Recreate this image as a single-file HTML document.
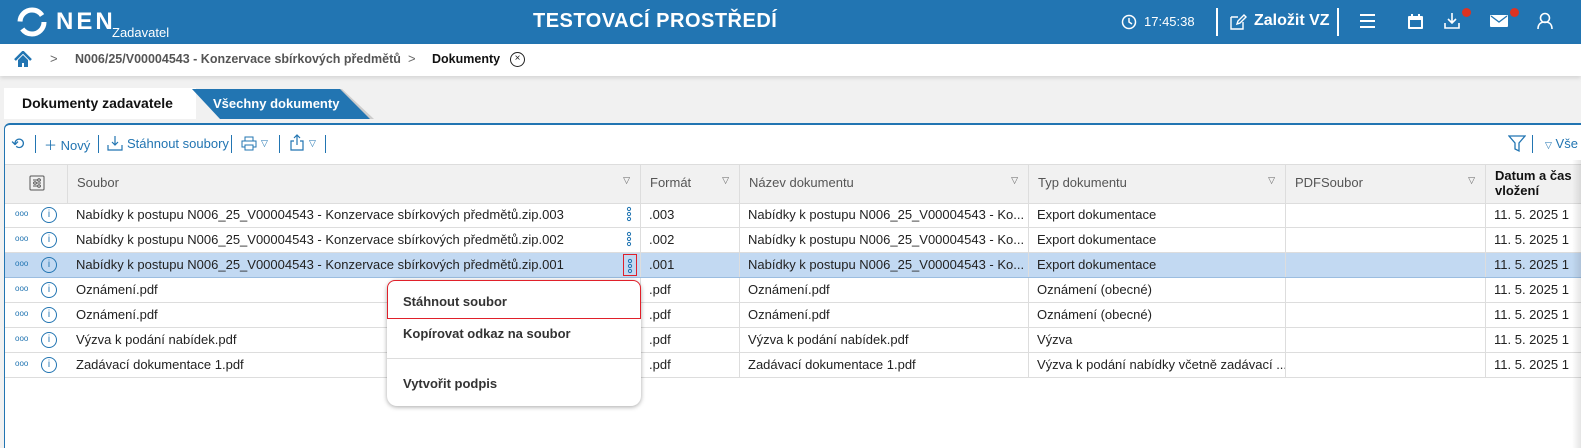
<!DOCTYPE html>
<html><head><meta charset="utf-8"><style>
*{box-sizing:border-box;margin:0;padding:0}
body{width:1581px;height:448px;overflow:hidden;background:#f1f1f1;font-family:"Liberation Sans",Arial,sans-serif;font-size:13px;color:#222;position:relative}
.top{position:absolute;left:0;top:0;width:1581px;height:44px;background:#2275b2;color:#fff}
.bc{position:absolute;left:0;top:44px;width:1581px;height:32px;background:#fff;box-shadow:0 2px 4px rgba(0,0,0,.12)}
.abs{position:absolute}
.panel{position:absolute;left:4px;top:123px;width:1577px;height:325px;background:#fff;border-top:2px solid #2275b2;border-left:1px solid #2275b2;border-top-left-radius:6px}
.hdr{position:absolute;top:164px;height:40px;background:#f1f1f1;border-right:1px solid #ddd;border-top:1px solid #ddd;border-bottom:1px solid #ddd;color:#555}
.row{position:absolute;left:5px;width:1576px;height:25px;border-bottom:1px solid #ddd}
.cell{position:absolute;top:0;height:24px;line-height:24px;border-right:1px solid #ddd;padding-left:8px;white-space:nowrap;overflow:hidden}
.tri{position:absolute;right:10px;top:10px;font-size:9px;color:#666}
.ico{color:#2275b2}
.menu{position:absolute;left:387px;top:280px;width:254px;height:126px;background:#fff;border-radius:10px;box-shadow:0 1px 5px rgba(0,0,0,.35)}
.menu div{position:absolute;left:16px;font-weight:bold;font-size:13px;color:#333}
</style></head><body>
<div class="top">
 <svg class="abs" style="left:16px;top:6px" width="32" height="32" viewBox="0 0 32 32"><circle cx="16" cy="16" r="12" fill="none" stroke="#fff" stroke-width="5" stroke-dasharray="30 8"/></svg>
 <div class="abs" style="left:56px;top:8px;font-size:24px;font-weight:bold;letter-spacing:3px">NEN</div>
 <div class="abs" style="left:112px;top:25px;font-size:13px">Zadavatel</div>
 <div class="abs" style="left:533px;top:10px;font-size:20px;font-weight:bold;letter-spacing:.5px">TESTOVACÍ PROSTŘEDÍ</div>
 <svg class="abs" style="left:1121px;top:14px" width="16" height="16"><circle cx="8" cy="8" r="6.5" fill="none" stroke="#fff" stroke-width="1.5"/><path d="M8 4v4l3 2" stroke="#fff" fill="none" stroke-width="1.5"/></svg>
 <div class="abs" style="left:1144px;top:14px;font-size:13px">17:45:38</div>
 <div class="abs" style="left:1216px;top:8px;width:2px;height:28px;background:#fff"></div>
 <svg class="abs" style="left:1229px;top:13px" width="18" height="18"><path d="M2 4h7M2 4v12h12v-7M8 11l1-3 6-6 2 2-6 6z" stroke="#fff" fill="none" stroke-width="1.4"/></svg>
 <div class="abs" style="left:1254px;top:12px;font-size:16px;font-weight:bold">Založit VZ</div>
 <div class="abs" style="left:1337px;top:8px;width:2px;height:28px;background:#fff"></div>
 <div class="abs" style="left:1360px;top:14px;width:15px;height:2px;background:#fff;box-shadow:0 6px 0 #fff,0 12px 0 #fff"></div>
 <svg class="abs" style="left:1407px;top:13px" width="17" height="17"><rect x="1" y="3" width="15" height="13" rx="1" fill="#fff"/><rect x="3" y="7" width="11" height="7" fill="#2275b2"/><path d="M5 1v4M12 1v4" stroke="#fff" stroke-width="2"/></svg>
 <svg class="abs" style="left:1443px;top:12px" width="18" height="18"><path d="M9 1v10M5 7l4 4 4-4M2 11v5h14v-5" stroke="#fff" fill="none" stroke-width="1.6"/></svg>
 <div class="abs" style="left:1462px;top:8px;width:9px;height:9px;border-radius:50%;background:#d32"></div>
 <svg class="abs" style="left:1490px;top:14px" width="18" height="14"><rect x="0" y="1" width="18" height="12" rx="1" fill="#fff"/><path d="M1 2l8 6 8-6" stroke="#2275b2" fill="none" stroke-width="1.3"/></svg>
 <div class="abs" style="left:1510px;top:8px;width:9px;height:9px;border-radius:50%;background:#d32"></div>
 <svg class="abs" style="left:1537px;top:12px" width="16" height="18"><circle cx="8" cy="6" r="4.5" fill="none" stroke="#fff" stroke-width="1.6"/><path d="M1 17c0-5 3-7 7-7s7 2 7 7" stroke="#fff" fill="none" stroke-width="1.6"/></svg>
</div>
<div class="bc">
 <svg class="abs" style="left:14px;top:7px" width="18" height="17"><path d="M1 9L9 1l8 8" stroke="#2275b2" fill="none" stroke-width="2.5"/><path d="M4 9v7h4v-4h2v4h4V9L9 4z" fill="#2275b2"/></svg>
 <div class="abs" style="left:50px;top:7px;color:#666">&gt;</div>
 <div class="abs" style="left:75px;top:8px;color:#555;font-weight:bold;font-size:12.5px">N006/25/V00004543 - Konzervace sbírkových předmětů</div>
 <div class="abs" style="left:408px;top:7px;color:#666">&gt;</div>
 <div class="abs" style="left:432px;top:8px;font-weight:bold;font-size:12.5px;color:#111">Dokumenty</div>
 <div class="abs" style="left:510px;top:8px;width:15px;height:15px;border:1.3px solid #222;border-radius:50%;font-size:10px;line-height:12px;text-align:center">×</div>
</div>
<div class="abs" style="left:4px;top:88px;width:192px;height:31px;background:#fff"></div>
<div class="abs" style="left:22px;top:95px;font-size:14px;font-weight:bold;color:#111">Dokumenty zadavatele</div>
<svg class="abs" style="left:192px;top:89px" width="185" height="30"><path d="M0 0H150L182 30H30Z" fill="#ccc"/><path d="M0 0H148L178 30H28Z" fill="#2275b2"/></svg>
<div class="abs" style="left:213px;top:96px;font-size:13px;font-weight:bold;color:#fff">Všechny dokumenty</div>
<div class="panel"></div>
<div class="abs ico" style="left:11px;top:134px;font-size:16px">⟲</div>
<div class="abs" style="left:35px;top:135px;width:1px;height:18px;background:#2275b2"></div>
<div class="abs ico" style="left:44px;top:135px;font-size:13px">＋ Nový</div>
<div class="abs" style="left:98px;top:135px;width:1px;height:18px;background:#2275b2"></div>
<svg class="abs" style="left:107px;top:135px" width="16" height="16"><path d="M8 1v9M5 7l3 3 3-3M1 10v5h14v-5" stroke="#2275b2" fill="none" stroke-width="1.2"/></svg>
<div class="abs ico" style="left:127px;top:136px">Stáhnout soubory</div>
<div class="abs" style="left:231px;top:135px;width:1px;height:18px;background:#2275b2"></div>
<svg class="abs" style="left:241px;top:136px" width="16" height="15"><rect x="4" y="1" width="8" height="4" fill="none" stroke="#2275b2"/><rect x="1" y="5" width="14" height="6" fill="none" stroke="#2275b2"/><rect x="4" y="9" width="8" height="5" fill="#fff" stroke="#2275b2"/></svg>
<div class="abs ico" style="left:261px;top:138px;font-size:9px">▽</div>
<div class="abs" style="left:279px;top:135px;width:1px;height:18px;background:#2275b2"></div>
<svg class="abs" style="left:289px;top:134px" width="16" height="18"><path d="M8 1v10M5 4l3-3 3 3M5 7H2v9h12V7h-3" stroke="#2275b2" fill="none" stroke-width="1.2"/></svg>
<div class="abs ico" style="left:309px;top:138px;font-size:9px">▽</div>
<div class="abs" style="left:325px;top:135px;width:1px;height:18px;background:#2275b2"></div>
<svg class="abs" style="left:1508px;top:135px" width="18" height="18"><path d="M1 1h16l-6 7v8l-4 -2V8z" stroke="#2275b2" fill="none" stroke-width="1.3"/></svg>
<div class="abs" style="left:1532px;top:135px;width:1px;height:18px;background:#2275b2"></div>
<div class="abs ico" style="left:1545px;top:136px"><span style="font-size:9px">▽</span> Vše</div>

<div class="hdr" style="left:5px;width:63px"><svg class="abs" style="left:24px;top:10px" width="16" height="16"><rect x="1" y="1" width="14" height="14" rx="1" fill="none" stroke="#555"/><path d="M4 5h8M4 8h8M4 11h8" stroke="#555"/><circle cx="10" cy="5" r="1.3" fill="#fff" stroke="#555"/><circle cx="6" cy="8" r="1.3" fill="#fff" stroke="#555"/><circle cx="10" cy="11" r="1.3" fill="#fff" stroke="#555"/></svg></div>
<div class="hdr" style="left:68px;width:573px"><span class="abs" style="left:9px;top:10px">Soubor</span><span class="tri">▽</span></div>
<div class="hdr" style="left:641px;width:99px"><span class="abs" style="left:9px;top:10px">Formát</span><span class="tri">▽</span></div>
<div class="hdr" style="left:740px;width:289px"><span class="abs" style="left:9px;top:10px">Název dokumentu</span><span class="tri">▽</span></div>
<div class="hdr" style="left:1029px;width:257px"><span class="abs" style="left:9px;top:10px">Typ dokumentu</span><span class="tri">▽</span></div>
<div class="hdr" style="left:1286px;width:200px"><span class="abs" style="left:9px;top:10px">PDFSoubor</span><span class="tri">▽</span></div>
<div class="hdr" style="left:1486px;width:95px;border-right:none"><span class="abs" style="left:9px;top:3px;font-weight:bold;color:#111;line-height:15px">Datum a čas<br>vložení</span></div>

<div id="rows"></div>
<script>
var d=[["Nabídky k postupu N006_25_V00004543 - Konzervace sbírkových předmětů.zip.003",".003","Nabídky k postupu N006_25_V00004543 - Ko...","Export dokumentace",1],
["Nabídky k postupu N006_25_V00004543 - Konzervace sbírkových předmětů.zip.002",".002","Nabídky k postupu N006_25_V00004543 - Ko...","Export dokumentace",1],
["Nabídky k postupu N006_25_V00004543 - Konzervace sbírkových předmětů.zip.001",".001","Nabídky k postupu N006_25_V00004543 - Ko...","Export dokumentace",2],
["Oznámení.pdf",".pdf","Oznámení.pdf","Oznámení (obecné)",0],
["Oznámení.pdf",".pdf","Oznámení.pdf","Oznámení (obecné)",0],
["Výzva k podání nabídek.pdf",".pdf","Výzva k podání nabídek.pdf","Výzva",0],
["Zadávací dokumentace 1.pdf",".pdf","Zadávací dokumentace 1.pdf","Výzva k podání nabídky včetně zadávací ...",0]];
var h="";
d.forEach(function(r,i){var t=203+i*25;var bg=i==2?"background:#c2d9f2;border-bottom-color:#9bbde0;":"";
h+='<div class="row" style="top:'+t+'px;'+bg+'">'+
'<div class="cell" style="left:0;width:63px;border-right:none"><span class="ico" style="position:absolute;left:10px;top:-1px;font-size:8px;letter-spacing:0">ooo</span><span class="ico" style="position:absolute;left:36px;top:4px;width:16px;height:16px;border:1.2px solid #2275b2;border-radius:50%;font-size:10px;line-height:13px;text-align:center">i</span></div>'+
'<div class="cell" style="left:63px;width:573px">'+r[0]+(r[4]?'<span style="position:absolute;left:555px;top:'+(r[4]==2?1:3)+'px;width:14px;height:'+(r[4]==2?22:18)+'px;'+(r[4]==2?'border:1px solid #e0202a;':'')+'"><svg style="position:absolute;left:3px;top:'+(r[4]==2?3:0)+'px" width="6" height="16"><circle cx="3" cy="3" r="1.6" fill="none" stroke="#2275b2"/><circle cx="3" cy="8" r="1.6" fill="none" stroke="#2275b2"/><circle cx="3" cy="13" r="1.6" fill="none" stroke="#2275b2"/></svg></span>':'')+'</div>'+
'<div class="cell" style="left:636px;width:99px">'+r[1]+'</div>'+
'<div class="cell" style="left:735px;width:289px">'+r[2]+'</div>'+
'<div class="cell" style="left:1024px;width:257px">'+r[3]+'</div>'+
'<div class="cell" style="left:1281px;width:200px"></div>'+
'<div class="cell" style="left:1481px;width:95px;border-right:none">11. 5. 2025 1</div></div>';});
document.getElementById("rows").innerHTML=h;
</script>
<div class="abs" style="left:1572px;top:160px;width:9px;height:288px;background:linear-gradient(90deg,rgba(0,0,0,0),rgba(0,0,0,.1))"></div>
<div class="menu">
 <div style="left:0;top:0;width:254px;height:39px;border:1.3px solid #e0202a;border-radius:8px 8px 0 0"></div>
 <div style="top:14px">Stáhnout soubor</div>
 <div style="top:46px">Kopírovat odkaz na soubor</div>
 <div style="left:0;top:78px;width:254px;height:1px;background:#ddd"></div>
 <div style="top:96px">Vytvořit podpis</div>
</div>
</body></html>
